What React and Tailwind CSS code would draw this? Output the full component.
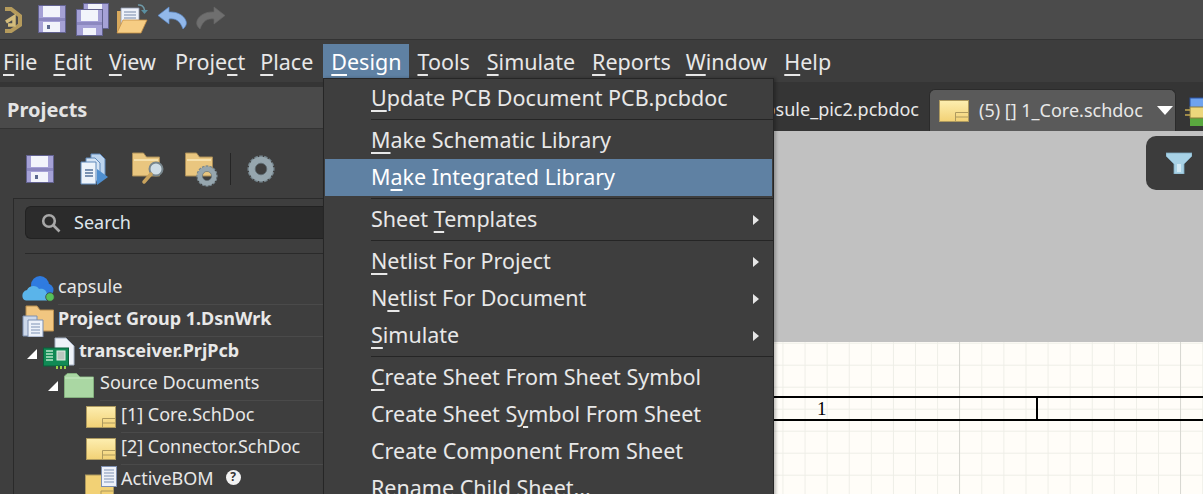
const Font = '[font-family:"Noto_Sans",sans-serif]';

function U({ children }) {
  return <span className="underline underline-offset-[4px] decoration-[1.5px]">{children}</span>;
}

function Floppy({ className }) {
  return (
    <svg viewBox="0 0 28 28" className={className}>
      <rect x="0.5" y="0.5" width="27" height="27" fill="#a5a1d6" stroke="#62628f" />
      <rect x="5" y="1" width="17" height="11" fill="#f2f4fb" />
      <rect x="5" y="17" width="17" height="10" fill="#f2f4fb" />
      <rect x="9" y="20" width="3" height="4" fill="#5c6a90" />
      <rect x="1" y="13" width="26" height="3" fill="#8c88c0" />
    </svg>
  );
}

function DoubleFloppy({ className }) {
  return (
    <svg viewBox="0 0 33 33" className={className}>
      <rect x="7.5" y="0.5" width="25" height="25" fill="#a5a1d6" stroke="#62628f" />
      <rect x="12" y="1" width="14" height="6" fill="#f2f4fb" />
      <rect x="0.5" y="6.5" width="26" height="26" fill="#a5a1d6" stroke="#62628f" />
      <rect x="5" y="7" width="17" height="11" fill="#f2f4fb" />
      <rect x="7" y="25" width="13" height="7" fill="#f2f4fb" />
      <rect x="1" y="19" width="25" height="3" fill="#8c88c0" />
    </svg>
  );
}

function OpenFolder({ className }) {
  return (
    <svg viewBox="0 0 32 31" className={className}>
      <path d="M1 8h7v22H1z" fill="#d8a95c" />
      <path d="M5 5h18v17H5z" fill="#eef2fa" stroke="#8d97ad" strokeWidth="0.8" />
      <path d="M8 9h12M8 12h12M8 15h12M8 18h12" stroke="#7587a8" strokeWidth="1" />
      <path d="M1 30 7 17h24l-6 13z" fill="#f6cd84" stroke="#c58f45" strokeWidth="0.8" />
      <path d="M22 2c3-.5 6 1 6.500 5" fill="none" stroke="#6f9aa8" strokeWidth="1.500" />
      <path d="M25 7h7l-3.500 4z" fill="#5a8fa0" />
    </svg>
  );
}

function Undo({ className, color = "#92b8ea", dark = "#5f8ccc", flip = false }) {
  return (
    <svg viewBox="0 0 30 24" className={className} style={flip ? { transform: "scaleX(-1)" } : undefined}>
      <path d="M12 1 1 9.500 12 18v-5c6-1 11 1.500 14 10 3-3 4-5 3-8-2-6-9-9.500-17-9z" fill={color} stroke={dark} strokeWidth="0.7" />
    </svg>
  );
}

function Gear({ className }) {
  const teeth = [0, 45, 90, 135, 180, 225, 270, 315, 22.5, 67.5, 112.5, 157.5, 202.5, 247.5, 292.5, 337.5];
  return (
    <svg viewBox="0 0 28 28" className={className}>
      {teeth.map((a) => (
        <rect key={a} x="12.200" y="0.500" width="3.600" height="6" fill="#76868e" transform={`rotate(${a} 14 14)`} />
      ))}
      <circle cx="14" cy="14" r="9" fill="none" stroke="#96a6ae" strokeWidth="6.500" />
      <circle cx="14" cy="14" r="5.800" fill="none" stroke="#5d6a70" strokeWidth="0.800" />
    </svg>
  );
}

function FolderBack({ c1 = "#e9c67f", c2 = "#f6e1ac", s = "#a78b57" }) {
  return (
    <>
      <path d="M.5 1h11l3 4h13v19H.5z" fill={c1} stroke={s} />
      <path d="M2 7h24v2H2z" fill={c2} />
    </>
  );
}

function FolderSearch({ className }) {
  return (
    <svg viewBox="0 0 33 36" className={className}>
      <FolderBack />
      <circle cx="24" cy="17" r="6.500" fill="#cfdde6" stroke="#77858c" strokeWidth="2" />
      <path d="m19 22-7 8" stroke="#c9a35d" strokeWidth="3.500" strokeLinecap="round" />
    </svg>
  );
}

function FolderGear({ className }) {
  return (
    <svg viewBox="0 0 33 36" className={className}>
      <FolderBack />
      <foreignObject x="11" y="13" width="22" height="22">
        <Gear className="w-[22px] h-[22px] block" />
      </foreignObject>
    </svg>
  );
}

function CopyDocs({ className }) {
  return (
    <svg viewBox="0 0 28 32" className={className}>
      <path d="M11 1h9l5 5v18H11z" fill="#bcd4ee" stroke="#5f89bb" />
      <path d="M6 5h9l5 5v18H6z" fill="#d5e4f4" stroke="#5f89bb" />
      <path d="M1 9h15v22H1z" fill="#edf3fa" stroke="#5f89bb" />
      <path d="M5 17h8M5 20h8M5 23h8" stroke="#54739a" strokeWidth="1.500" />
      <path d="M17 16 28 24 17 32z" fill="#4f8fd0" />
    </svg>
  );
}

function Sheet({ className }) {
  return (
    <svg viewBox="0 0 30 22" className={className}>
      <defs>
        <linearGradient id="sheetFill" x1="0" y1="0" x2="0" y2="1">
          <stop offset="0" stopColor="#fdeeb0" />
          <stop offset="1" stopColor="#f2d175" />
        </linearGradient>
      </defs>
      <rect x="0.500" y="0.500" width="29" height="21" fill="url(#sheetFill)" stroke="#ae9a5f" />
      <path d="M16.500 21.500v-9h13" fill="none" stroke="#ae9a5f" />
      <path d="M16.500 17h13" stroke="#ae9a5f" />
    </svg>
  );
}

function Cloud({ className }) {
  return (
    <svg viewBox="0 0 33 28" className={className}>
      <circle cx="18" cy="10" r="9" fill="#2f7be0" />
      <circle cx="25" cy="15" r="6.500" fill="#2f7be0" />
      <path d="M4 25.500C-1 25 -1 16 5 15c2-5 10-5 12-1 5-1 8 2 8 6v5.500z" fill="#5ab4ea" />
      <circle cx="28" cy="22" r="4.300" fill="#55c15a" stroke="#3e3e3e" strokeWidth="0.800" />
    </svg>
  );
}

function GroupIcon({ className }) {
  return (
    <svg viewBox="0 0 32 32" className={className}>
      <path d="M4 1h11l3 4h13.500v21H4z" fill="#f1c680" stroke="#b98e4f" />
      <path d="M1 11h14v20H1z" fill="#ccd8ea" stroke="#7d8fb0" />
      <path d="M6 15h15v17H6z" fill="#edf2fa" stroke="#7d8fb0" />
      <path d="M9 19h9M9 22h9M9 25h9M9 28h9" stroke="#7e93b5" />
    </svg>
  );
}

function PcbIcon({ className }) {
  return (
    <svg viewBox="0 0 32 32" className={className}>
      <path d="M12 1h11l8 8v19H12z" fill="#eef2f8" stroke="#a6b2c5" />
      <rect x="0.500" y="11" width="25" height="18" fill="#118a55" stroke="#0b5e3a" />
      <path d="M3 14h7M3 17h7M3 20h7M3 23h7" stroke="#b8e6c8" strokeWidth="1.500" />
      <rect x="14" y="14" width="8" height="9" fill="#b9c7bf" stroke="#e2efe5" />
      <path d="M14 29v3M18 29v3M22 29v3" stroke="#9ad04a" strokeWidth="2" />
    </svg>
  );
}

function GreenFolder({ className }) {
  return (
    <svg viewBox="0 0 30 25" className={className}>
      <path d="M.5 24.500V3l3-2.500h9L16 4h13.500v20.500z" fill="#aad7a3" stroke="#84b07e" />
      <path d="M1 5h28" stroke="#c8ebc4" />
    </svg>
  );
}

function BomIcon({ className }) {
  return (
    <svg viewBox="0 0 32 36" className={className}>
      <rect x="0.500" y="9" width="28" height="27" fill="#f2d175" stroke="#ae9a5f" />
      <path d="M16 36V25h13" fill="none" stroke="#ae9a5f" />
      <rect x="16.500" y="0.500" width="15" height="20" fill="#eef2fa" stroke="#7d8fb0" />
      <path d="M19 4h10M19 7h10M19 10h10M19 13h10M19 16h10" stroke="#7e93b5" />
    </svg>
  );
}

function Tri({ className = "" }) {
  return <div className={`w-0 h-0 border-l-[10px] border-l-transparent border-b-[10px] border-b-white ${className}`} />;
}

function Row({ pl, tri, icon, bold, label, extra, labelMl = "ml-1" }) {
  return (
    <div className="flex h-[32px] items-center" style={{ paddingLeft: pl }}>
      {tri && <Tri className="mr-[6px] mt-[2px]" />}
      {icon}
      <div className={`flex-1 self-stretch border-b border-[#4a4a4a] flex items-center pb-[5px] gap-[12px] whitespace-nowrap ${labelMl} ${bold ? "font-bold" : ""}`}>
        {label}
        {extra}
      </div>
    </div>
  );
}

function MenuRow({ children, hi, arrow }) {
  return (
    <div className={`h-[37px] flex items-center pl-[46px] pr-[13px] ml-[1px] mr-[1px] justify-between whitespace-nowrap ${hi ? "bg-[#5f81a3] text-white" : ""}`}>
      <span>{children}</span>
      {arrow && <div className="w-0 h-0 border-y-[5.500px] border-y-transparent border-l-[6px] border-l-[#e6e6e6]" />}
    </div>
  );
}

function Sep() {
  return (
    <div className="h-[5px] pl-[47px] flex items-center">
      <div className="w-full h-px bg-[#252525]" />
    </div>
  );
}

export default function App() {
  return (
    <div className={`relative w-[1203px] h-[494px] overflow-hidden flex flex-col bg-[#3e3e3e] text-[#e8e8e8] ${Font}`}>
      {/* quick access */}
      <div className="h-[40px] shrink-0 bg-[#4b4b4b] border-b border-[#333] flex items-center">
        <svg viewBox="0 0 20 26" className="w-[20px] h-[26px] ml-[2px]">
          <path d="M3 2h6l9 7v9l-9 6H3" fill="none" stroke="#b59b5c" strokeWidth="4" />
          <path d="M4 15l8-5v8H6" fill="none" stroke="#d4bd7c" strokeWidth="3.500" />
        </svg>
        <Floppy className="w-[28px] h-[28px] ml-[16px] -mt-[2px]" />
        <DoubleFloppy className="w-[33px] h-[33px] ml-[10px] -mt-[1px]" />
        <OpenFolder className="w-[32px] h-[31px] ml-[7px] -mt-[3px]" />
        <Undo className="w-[30px] h-[24px] ml-[9px] -mt-[4px]" />
        <Undo className="w-[30px] h-[24px] ml-[9px] -mt-[4px]" color="#6f6f6f" dark="#666" flip />
      </div>
      {/* menu bar */}
      <div className="h-[42px] shrink-0 bg-[#3d3d3d] flex items-center text-[21.5px] pl-[3px] gap-[16px] whitespace-nowrap">
        <span className="mt-[2px]"><U>F</U>ile</span>
        <span className="mt-[2px]"><U>E</U>dit</span>
        <span className="mt-[2px] ml-[1px]"><U>V</U>iew</span>
        <span className="mt-[2px] ml-[3px]">Proje<U>c</U>t</span>
        <span className="mt-[2px] -ml-[1px]"><U>P</U>lace</span>
        <span className="bg-[#5f81a3] h-[34px] -mr-[8px] ml-[-6px] px-[8px] pt-[2px] flex items-center text-white"><U>D</U>esign</span>
        <span className="mt-[2px]"><U>T</U>ools</span>
        <span className="mt-[2px] ml-[1px]"><U>S</U>imulate</span>
        <span className="mt-[2px] ml-[1px]"><U>R</U>eports</span>
        <span className="mt-[2px] -ml-[1px]"><U>W</U>indow</span>
        <span className="mt-[2px] ml-[1px]"><U>H</U>elp</span>
      </div>
      <div className="h-[5px] shrink-0 bg-[#353535]" />
      {/* body */}
      <div className="flex-1 min-h-0 flex">
        {/* projects panel */}
        <div className="w-[324px] shrink-0 border-r border-[#2a2a2a] flex flex-col bg-[#3e3e3e]">
          <div className="h-[42px] shrink-0 bg-[#4a4a4a] border-b border-[#333] flex items-center pl-[7px] pt-[4px] text-[20px] font-bold text-[#e4e4e4]">
            Projects
          </div>
          <div className="h-[69px] shrink-0 flex items-center pt-[10px]">
            <Floppy className="w-[28px] h-[28px] ml-[26px]" />
            <CopyDocs className="w-[28px] h-[32px] ml-[26px]" />
            <FolderSearch className="w-[33px] h-[36px] ml-[24px] mt-[2px]" />
            <FolderGear className="w-[33px] h-[36px] ml-[20px] mt-[2px]" />
            <div className="w-px h-[32px] bg-[#252525] ml-[12px]" />
            <Gear className="w-[28px] h-[28px] ml-[16px]" />
          </div>
          <div className="flex-1 min-h-0 ml-[13px] border-l border-t border-[#2a2a2a] text-[18px]">
            <div className="ml-[11px] h-[55px] border-b border-[#2a2a2a] pt-[7px]">
              <div className="h-[33px] bg-[#2b2b2b] border border-[#222] border-r-0 rounded-l-[6px] flex items-center">
                <svg viewBox="0 0 20 20" className="w-[20px] h-[20px] ml-[15px]" fill="none" stroke="#a8a8a8" strokeWidth="2.600">
                  <circle cx="8" cy="8" r="5.800" />
                  <path d="m12.500 12.500 6 6" />
                </svg>
                <span className="ml-[13px] text-[#dfe6ec]">Search</span>
              </div>
            </div>
            <div className="pt-[19px]">
              <Row pl="8px" icon={<Cloud className="w-[33px] h-[28px] shrink-0" />} label="capsule" labelMl="ml-[3px]" />
              <Row pl="8px" bold icon={<GroupIcon className="w-[32px] h-[32px] shrink-0" />} label="Project Group 1.DsnWrk" labelMl="ml-[4px]" />
              <Row pl="13px" tri bold icon={<PcbIcon className="w-[32px] h-[32px] shrink-0" />} label="transceiver.PrjPcb" labelMl="ml-[4px]" />
              <Row pl="34px" tri icon={<GreenFolder className="w-[30px] h-[25px] shrink-0" />} label="Source Documents" labelMl="ml-[6px]" />
              <Row pl="72px" icon={<Sheet className="w-[30px] h-[22px] shrink-0" />} label="[1] Core.SchDoc" labelMl="ml-[5px]" />
              <Row pl="72px" icon={<Sheet className="w-[30px] h-[22px] shrink-0" />} label="[2] Connector.SchDoc" labelMl="ml-[5px]" />
              <Row
                pl="71px"
                icon={<BomIcon className="w-[32px] h-[36px] shrink-0 mt-[6px]" />}
                label="ActiveBOM"
                labelMl="ml-[4px]"
                extra={
                  <span className="w-[15px] h-[15px] rounded-full bg-[#f2f2f2] text-[#333] text-[12px] font-bold flex items-center justify-center -mt-[2px]">?</span>
                }
              />
            </div>
          </div>
        </div>
        {/* document area */}
        <div className="flex-1 min-w-0 flex flex-col">
          <div className="h-[44px] shrink-0 bg-[#353535] flex items-end overflow-hidden text-[18px]">
            <div className="w-[605px] shrink-0 h-[42px] flex items-center justify-end pr-[10px] whitespace-nowrap pb-[1px]">
              capsule_pic2.pcbdoc
            </div>
            <div className="w-[247px] shrink-0 h-[42px] bg-[#5a5a5a] border border-[#2b2b2b] border-b-0 rounded-t-[6px] flex items-center pl-[9px] whitespace-nowrap">
              <Sheet className="w-[30px] h-[22px] shrink-0" />
              <span className="ml-[10px] pb-[1px]">(5) [] 1_Core.schdoc</span>
              <div className="ml-[14px] w-0 h-0 border-x-[8px] border-x-transparent border-t-[9px] border-t-white" />
            </div>
            <svg viewBox="0 0 20 30" className="w-[20px] h-[30px] shrink-0 ml-[9px] mb-[4px]">
              <rect x="5" y="1" width="14" height="10" fill="#6fa3ee" stroke="#2a55a8" />
              <rect x="5" y="21" width="14" height="8" fill="#5aa83f" />
              <rect x="5" y="10" width="15" height="11" fill="#edd77c" stroke="#8a7a3c" />
              <path d="M0 13h5M0 18h5" stroke="#c4a850" strokeWidth="1.500" />
            </svg>
          </div>
          <div className="h-[211px] shrink-0 bg-[#c1c1c1]" />
          <div className="flex-1 min-h-0 pt-[54px] bg-[#fffdf8] bg-[linear-gradient(to_right,#d8d8d2_1px,transparent_1px),linear-gradient(to_right,#eeeee7_1px,transparent_1px),linear-gradient(to_bottom,#eeeee7_1px,transparent_1px)] bg-[size:221px_100%,22.1px_100%,100%_22px] bg-[position:193px_0,16.600px_0,0_0.700px]">
            <div className="h-[25px] border-y-2 border-black flex">
              <div className="w-[714px] border-r-2 border-black shrink-0 pl-[493px] flex items-center text-black text-[19px] leading-none [font-family:'Liberation_Serif',serif]">
                1
              </div>
            </div>
          </div>
        </div>
      </div>

      {/* filter flyout */}
      <div className="absolute left-[1146px] top-[136px] w-[57px] h-[54px] bg-[#3c3c3c] rounded-l-[10px] flex items-center pl-[20px]">
        <svg viewBox="0 0 26 22" className="w-[26px] h-[22px]">
          <path d="M0 1h26v3l-8 8v10H8V12L0 4z" fill="#a8d2e6" stroke="#7eaac0" strokeWidth="0.800" />
          <path d="M11 12v8h4v-8z" fill="#d3eaf5" />
        </svg>
      </div>

      {/* design dropdown */}
      <div className="absolute left-[323px] top-[78px] w-[451px] h-[440px] bg-[#3e3e3e] border border-[#262626] text-[21.5px] pt-[1px] shadow-[2px_0_3px_rgba(0,0,0,0.25)]">
        <MenuRow><U>U</U>pdate PCB Document PCB.pcbdoc</MenuRow>
        <Sep />
        <MenuRow><U>M</U>ake Schematic Library</MenuRow>
        <MenuRow hi>M<U>a</U>ke Integrated Library</MenuRow>
        <Sep />
        <MenuRow arrow>Sheet <U>T</U>emplates</MenuRow>
        <Sep />
        <MenuRow arrow><U>N</U>etlist For Project</MenuRow>
        <MenuRow arrow>N<U>e</U>tlist For Document</MenuRow>
        <MenuRow arrow><U>S</U>imulate</MenuRow>
        <Sep />
        <MenuRow><U>C</U>reate Sheet From Sheet Symbol</MenuRow>
        <MenuRow>Create Sheet S<U>y</U>mbol From Sheet</MenuRow>
        <MenuRow>Create Component From Sheet</MenuRow>
        <MenuRow>Rename Child Sheet...</MenuRow>
      </div>
    </div>
  );
}
